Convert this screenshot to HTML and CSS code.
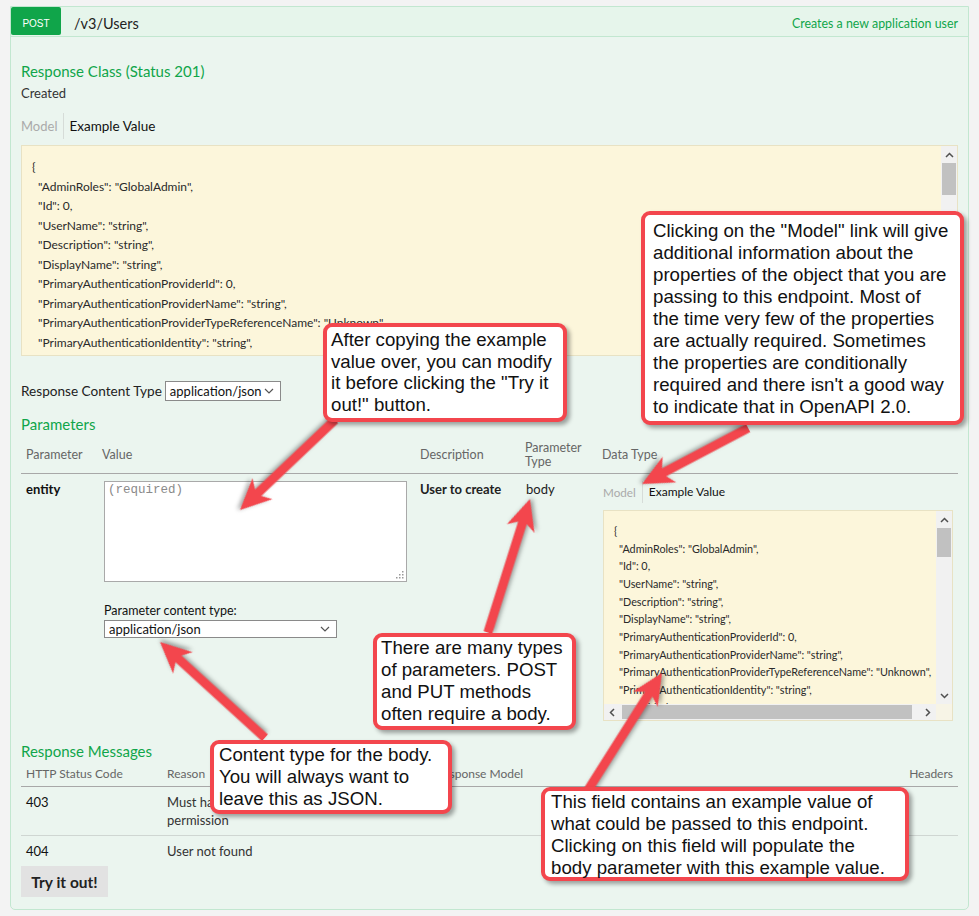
FILE: index.html
```html
<!DOCTYPE html>
<html>
<head>
<meta charset="utf-8">
<link rel="stylesheet" href="styles.css">
</head>
<body>
<div class="op">
  <div class="op-head">
    <span class="method">POST</span>
    <span class="path">/v3/Users</span>
    <span class="summary">Creates a new application user</span>
  </div>
  <div class="op-body">
    <h4 class="sec sec-first">Response Class (Status 201)</h4>
    <div class="created">Created</div>
    <div class="tabs"><span class="tab-model">Model</span><span class="tab-ex">Example Value</span></div>
    <div class="code code-big">
      <div class="code-text">
        <div>{</div>
        <div class="k">"AdminRoles": "GlobalAdmin",</div>
        <div class="k">"Id": 0,</div>
        <div class="k">"UserName": "string",</div>
        <div class="k">"Description": "string",</div>
        <div class="k">"DisplayName": "string",</div>
        <div class="k">"PrimaryAuthenticationProviderId": 0,</div>
        <div class="k">"PrimaryAuthenticationProviderName": "string",</div>
        <div class="k">"PrimaryAuthenticationProviderTypeReferenceName": "Unknown",</div>
        <div class="k">"PrimaryAuthenticationIdentity": "string",</div>
      </div>
      <div class="vscroll">
        <div class="sb-btn"><svg width="9" height="6" viewBox="0 0 9 6"><path d="M1 5 L4.5 1.5 L8 5" fill="none" stroke="#505050" stroke-width="1.5"/></svg></div>
        <div class="sb-thumb-v big"></div>
        <div class="sb-fill"></div>
        <div class="sb-btn"><svg width="9" height="6" viewBox="0 0 9 6"><path d="M1 1 L4.5 4.5 L8 1" fill="none" stroke="#505050" stroke-width="1.5"/></svg></div>
      </div>
    </div>

    <div class="rct">
      <span>Response Content Type</span>
      <div class="select select-rct"><span>application/json</span><svg width="10" height="6" viewBox="0 0 10 6"><path d="M1 1 L5 5 L9 1" fill="none" stroke="#555" stroke-width="1.2"/></svg></div>
    </div>

    <h4 class="sec sec-params">Parameters</h4>
    <div class="ptable">
      <div class="prow phead">
        <div>Parameter</div>
        <div>Value</div>
        <div>Description</div>
        <div>Parameter<br>Type</div>
        <div>Data Type</div>
      </div>
      <div class="prow pbody">
        <div class="pname">entity</div>
        <div class="pval">
          <div class="textarea"><span>(required)</span>
            <svg class="grip" width="8" height="8" viewBox="0 0 8 8"><g fill="#999"><rect x="6" y="0" width="1.5" height="1.5"/><rect x="3" y="3" width="1.5" height="1.5"/><rect x="6" y="3" width="1.5" height="1.5"/><rect x="0" y="6" width="1.5" height="1.5"/><rect x="3" y="6" width="1.5" height="1.5"/><rect x="6" y="6" width="1.5" height="1.5"/></g></svg>
          </div>
          <div class="pct-label">Parameter content type:</div>
          <div class="select select-pct"><span>application/json</span><svg width="10" height="6" viewBox="0 0 10 6"><path d="M1 1 L5 5 L9 1" fill="none" stroke="#555" stroke-width="1.2"/></svg></div>
        </div>
        <div class="pdesc">User to create</div>
        <div class="ptype">body</div>
        <div class="pdata">
          <div class="tabs tabs-sm"><span class="tab-model">Model</span><span class="tab-ex">Example Value</span></div>
          <div class="code code-sm">
            <div class="code-text sm">
              <div>{</div>
              <div class="k">"AdminRoles": "GlobalAdmin",</div>
              <div class="k">"Id": 0,</div>
              <div class="k">"UserName": "string",</div>
              <div class="k">"Description": "string",</div>
              <div class="k">"DisplayName": "string",</div>
              <div class="k">"PrimaryAuthenticationProviderId": 0,</div>
              <div class="k">"PrimaryAuthenticationProviderName": "string",</div>
              <div class="k">"PrimaryAuthenticationProviderTypeReferenceName": "Unknown",</div>
              <div class="k">"PrimaryAuthenticationIdentity": "string",</div>
              <div class="k">"IsEnabled": true,</div>
            </div>
            <div class="vscroll">
              <div class="sb-btn"><svg width="9" height="6" viewBox="0 0 9 6"><path d="M1 5 L4.5 1.5 L8 5" fill="none" stroke="#505050" stroke-width="1.5"/></svg></div>
              <div class="sb-thumb-v small"></div>
              <div class="sb-fill"></div>
              <div class="sb-btn"><svg width="9" height="6" viewBox="0 0 9 6"><path d="M1 1 L4.5 4.5 L8 1" fill="none" stroke="#505050" stroke-width="1.5"/></svg></div>
            </div>
            <div class="hscroll">
              <div class="sb-btn-h"><svg width="6" height="9" viewBox="0 0 6 9"><path d="M5 1 L1.5 4.5 L5 8" fill="none" stroke="#505050" stroke-width="1.5"/></svg></div>
              <div class="sb-thumb-h"></div>
              <div class="sb-btn-h"><svg width="6" height="9" viewBox="0 0 6 9"><path d="M1 1 L4.5 4.5 L1 8" fill="none" stroke="#505050" stroke-width="1.5"/></svg></div>
            </div>
            <div class="sb-corner"></div>
          </div>
        </div>
      </div>
    </div>

    <h4 class="sec sec-resp">Response Messages</h4>
    <div class="rtable">
      <div class="rrow rhead">
        <div>HTTP Status Code</div>
        <div>Reason</div>
        <div>Response Model</div>
        <div class="hdr">Headers</div>
      </div>
      <div class="rrow rbody">
        <div class="code-num">403</div>
        <div>Must have user administration<br>permission</div>
        <div></div>
        <div></div>
      </div>
      <div class="rrow rbody last">
        <div class="code-num">404</div>
        <div>User not found</div>
        <div></div>
        <div></div>
      </div>
    </div>
    <button class="try">Try it out!</button>
  </div>
</div>

<svg class="arrows" width="979" height="916" viewBox="0 0 979 916">
  <g class="arrow" transform="translate(240 510) rotate(136.5)"><polygon points="-131,-4.5 -25,-4.5 -31,-14.5 0,0 -31,14.5 -25,4.5 -131,4.5"/></g>
  <g class="arrow" transform="translate(642 484) rotate(152.2)"><polygon points="-120,-4.5 -25,-4.5 -31,-14.5 0,0 -31,14.5 -25,4.5 -120,4.5"/></g>
  <g class="arrow" transform="translate(530 499) rotate(-72.5)"><polygon points="-140,-4.5 -25,-4.5 -31,-14.5 0,0 -31,14.5 -25,4.5 -140,4.5"/></g>
  <g class="arrow" transform="translate(160 642) rotate(-137.6)"><polygon points="-142,-4.5 -25,-4.5 -31,-14.5 0,0 -31,14.5 -25,4.5 -142,4.5"/></g>
  <g class="arrow" transform="translate(662 673) rotate(-57.7)"><polygon points="-138,-4.5 -25,-4.5 -31,-14.5 0,0 -31,14.5 -25,4.5 -138,4.5"/></g>
</svg>

<div class="callout c1">After copying the example<br>value over, you can modify<br>it before clicking the "Try it<br>out!" button.</div>
<div class="callout c2">Clicking on the "Model" link will give<br>additional information about the<br>properties of the object that you are<br>passing to this endpoint. Most of<br>the time very few of the properties<br>are actually required. Sometimes<br>the properties are conditionally<br>required and there isn't a good way<br>to indicate that in OpenAPI 2.0.</div>
<div class="callout c3">There are many types<br>of parameters. POST<br>and PUT methods<br>often require a body.</div>
<div class="callout c4">Content type for the body.<br>You will always want to<br>leave this as JSON.</div>
<div class="callout c5">This field contains an example value of<br>what could be passed to this endpoint.<br>Clicking on this field will populate the<br>body parameter with this example value.</div>
</body>
</html>
```

FILE: styles.css
```css
* { box-sizing: border-box; }
html, body { margin: 0; padding: 0; }
body {
  background: #f3f3f3;
  font-family: Lato, "Open Sans", sans-serif;
  color: #333;
  width: 979px;
  height: 916px;
  overflow: hidden;
}

.op {
  margin: 6px 10px 0;
  width: 959px;
  border: 1px solid #c2e7d0;
  border-radius: 0 0 5px 5px;
  background: #ebf5ef;
}
.op-head {
  display: flex;
  align-items: center;
  height: 30px;
  background: #e6f5eb;
  border-bottom: 1px solid #c2e7d0;
}
.method {
  align-self: flex-start;
  width: 50px;
  height: 28px;
  padding-top: 4px;
  background: #10a54a;
  color: #fff;
  font: 10px "Liberation Sans", Arial, sans-serif;
  display: flex;
  align-items: center;
  justify-content: center;
  border-radius: 2px;
}
.path { margin-left: 13px; padding-top: 3px; font-size: 14.5px; color: #222; }
.summary { margin-left: auto; padding-top: 3px; padding-right: 10px; font-size: 12.4px; color: #10a54a; }

.op-body { padding: 0 10px 12px; }
.sec {
  margin: 0;
  font-weight: normal;
  font-size: 15px;
  line-height: 20px;
  color: #10a54a;
}
.sec-first { margin-top: 24px; }
.created { margin-top: 3px; font-size: 13px; line-height: 18px; color: #333; }

.tabs { display: flex; align-items: center; height: 26px; margin-top: 11px; font-size: 13px; }
.tab-model {
  color: #aaa;
  padding-right: 6px;
  border-right: 1px solid #d6dcd8;
  height: 100%;
  display: flex;
  align-items: center;
}
.tab-ex { color: #111; padding-left: 5px; font-size: 13.5px; }
.tabs-sm { margin-top: 0; height: 22px; font-size: 11.7px; }
.tabs-sm .tab-ex { padding-left: 6px; font-size: 12px; }

.code {
  margin-top: 6px;
  background: #fcf6db;
  border: 1px solid #e8e2c4;
  overflow: hidden;
}
.code-big { height: 211px; display: flex; }
.code-text {
  flex: 1;
  padding: 11px 10px;
  font-size: 12px;
  line-height: 19.5px;
  color: #2a2a2a;
  overflow: hidden;
}
.code-text > div { white-space: pre; }
.code-text .k { padding-left: 6px; }
.code-text.sm { font-size: 10.8px; line-height: 17.67px; padding: 11px 10px; }
.code-text.sm .k { padding-left: 5px; }

.vscroll {
  width: 16px;
  background: #f1f1f1;
  display: flex;
  flex-direction: column;
}
.sb-btn { height: 17px; display: flex; align-items: center; justify-content: center; }
.sb-btn-h { width: 16px; display: flex; align-items: center; justify-content: center; }
.sb-thumb-v { background: #c1c1c1; margin: 0 1px; }
.sb-thumb-v.big { height: 32px; }
.sb-thumb-v.small { height: 29px; }
.sb-fill { flex: 1; }

.code-sm {
  margin-top: 7px;
  margin-right: 5px;
  height: 211px;
  display: grid;
  grid-template-columns: 1fr 16px;
  grid-template-rows: 1fr 16px;
}
.hscroll { background: #f1f1f1; display: flex; }
.sb-thumb-h { flex: 1; background: #c1c1c1; margin: 1px 8px 1px 2px; }
.sb-corner { background: #f7f4e6; }

.rct {
  margin-top: 25px;
  display: flex;
  align-items: center;
  font-size: 13.6px;
  color: #222;
  gap: 3px;
}
.select {
  display: flex;
  align-items: center;
  justify-content: space-between;
  background: #fff;
  border: 1px solid #8a8a8a;
  font-size: 13px;
  color: #111;
  padding: 0 6px 0 4px;
}
.select-rct { width: 116px; height: 20px; }
.select-pct { width: 233px; height: 18px; margin-top: 1px; }

.sec-params { margin-top: 13px; }
.ptable { margin-top: 3px; }
.prow {
  display: grid;
  grid-template-columns: 76px 318px 105px 77px 1fr;
}
.prow > div { padding-left: 5px; }
.phead {
  height: 37px;
  align-items: center;
  border-bottom: 1px solid #a8a8a8;
  font-size: 12.5px;
  line-height: 14px;
  color: #666;
}
.pbody { font-size: 13px; line-height: 16px; color: #222; }
.pbody > div { padding-top: 7px; }
.pname { font-weight: bold; color: #111; }
.pdesc { font-weight: bold; }
.ptype { padding-left: 6px !important; }
.pdata { padding-top: 7px !important; padding-left: 6px !important; }
.pval { padding-left: 7px !important; }
.textarea {
  position: relative;
  width: 303px;
  height: 101px;
  background: #fff;
  border: 1px solid #a9a9a9;
  padding: 1px 3px;
  font: 12.5px "Liberation Mono", monospace;
  color: #8a8a8a;
}
.grip { position: absolute; right: 2px; bottom: 2px; }
.pct-label { margin-top: 21px; font-size: 12.5px; line-height: 16px; color: #111; }

.sec-resp { margin-top: 20px; }
.rrow {
  display: grid;
  grid-template-columns: 141px 269px 1fr auto;
  font-size: 13px;
  line-height: 18px;
}
.rrow > div { padding: 0 5px; }
.rhead { height: 26px; align-items: center; border-bottom: 1px solid #a8a8a8; color: #666; font-size: 12px; }
.rbody { padding: 6px 0; border-bottom: 1px solid #cfd6d2; color: #333; }
.rbody.last { border-bottom: 0; }
.code-num { color: #111; }
.hdr { text-align: right; }

.try {
  display: block;
  width: 87px;
  height: 31px;
  border: 0;
  background: #e2e2e2;
  font-family: Lato, sans-serif;
  font-weight: bold;
  font-size: 15.5px;
  color: #222;
  padding: 0;
}

.arrows { position: absolute; left: 0; top: 0; pointer-events: none; }
.arrow { fill: #f3464d; filter: drop-shadow(2px 2px 2px rgba(0,0,0,0.35)); }

.callout {
  position: absolute;
  background: #fff;
  border: 4px solid #f3464d;
  border-radius: 9px;
  box-shadow: 3px 3px 4px rgba(0,0,0,0.35);
  font-family: "Liberation Sans", Arial, sans-serif;
  font-size: 18.67px;
  line-height: 22px;
  color: #111;
  white-space: nowrap;
}
.c1 { left: 323px; top: 323px; width: 244px; height: 99px; padding: 2px 4px; line-height: 21.5px; }
.c2 { left: 641px; top: 211px; width: 323px; height: 214px; padding: 5px 8px; }
.c3 { left: 373px; top: 633px; width: 203px; height: 97px; padding: 0 4px; }
.c4 { left: 210px; top: 740px; width: 242px; height: 74px; padding: 0 5px; }
.c5 { left: 541px; top: 787px; width: 368px; height: 94px; padding: 0 6px; }
```
